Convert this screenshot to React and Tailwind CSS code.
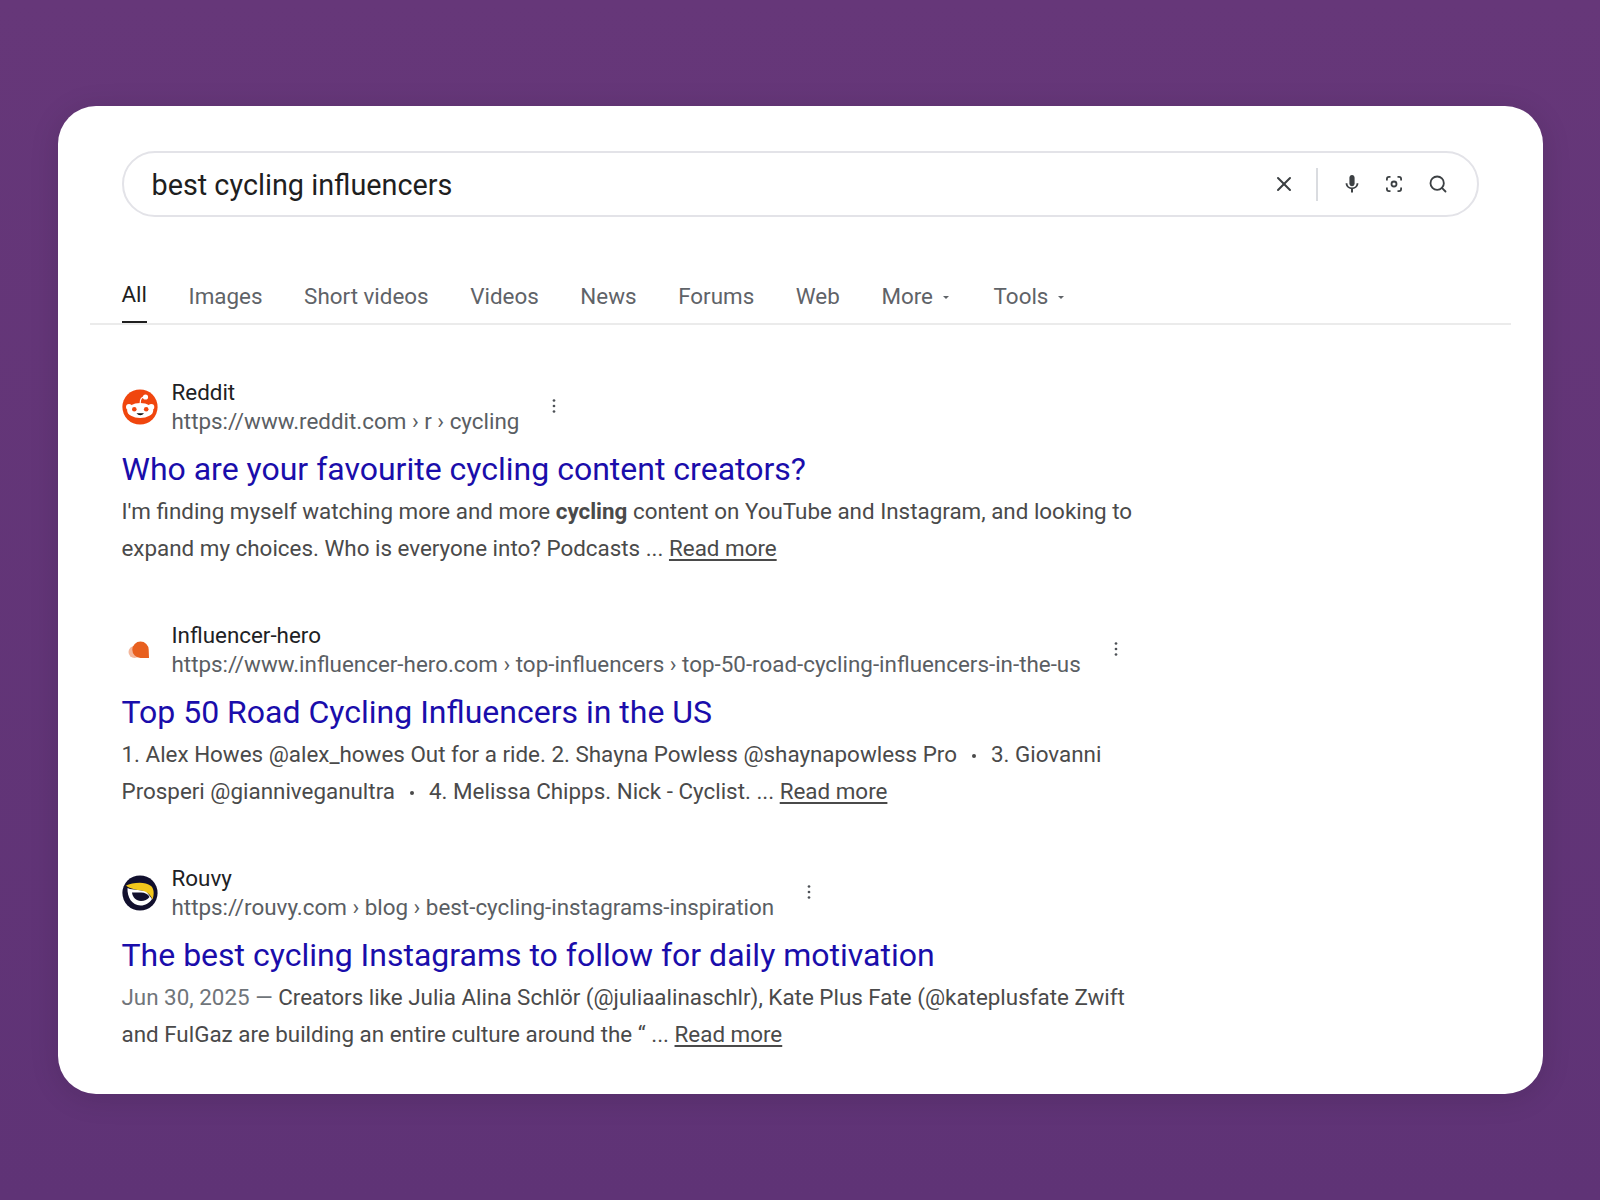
import React from 'react';
import { X, Search } from 'lucide-react';

const TABS = ['Images', 'Short videos', 'Videos', 'News', 'Forums', 'Web'];

function RedditIcon() {
  return (
    <svg viewBox="0 0 36 36" className="h-[36px] w-[36px]">
      <circle cx="18" cy="18" r="17.6" fill="#f0460e" />
      <circle cx="7" cy="18" r="3" fill="#fff" />
      <circle cx="29.300" cy="18" r="3" fill="#fff" />
      <ellipse cx="18.200" cy="21.500" rx="13" ry="7.500" fill="#fff" />
      <path d="M18.200 14 C18.200 10 19.500 7.500 23.500 7.800" fill="none" stroke="#fff" strokeWidth="1.200" />
      <circle cx="23.500" cy="8" r="2.600" fill="#fff" />
      <circle cx="12.300" cy="20.300" r="2.300" fill="#f0460e" />
      <circle cx="24.200" cy="20.300" r="2.300" fill="#f0460e" />
      <path d="M14.500 24.300 C16.500 26.800 20 26.800 22 24.300 Z" fill="#111" />
    </svg>
  );
}

function HeroIcon() {
  return (
    <svg viewBox="0 0 36 36" className="h-[36px] w-[36px]">
      <circle cx="12.500" cy="20" r="6" fill="#f4b79c" />
      <path d="M27 26 H18.500 A8.200 8.200 0 1 1 26.700 17.800 Z" fill="#e8601f" />
    </svg>
  );
}

function RouvyIcon() {
  return (
    <svg viewBox="0 0 36 36" className="h-[36px] w-[36px]">
      <circle cx="18" cy="18" r="17.600" fill="#12102e" />
      <path d="M5.500 13 C5 22 10 30.500 18.500 30.500 C23.500 30.500 27.500 28 30 24 L24 16 L8 14 Z" fill="#fff" />
      <path d="M10 17.500 C10.500 22 14 26 19 26 C22.500 26 25.500 24.500 27.500 22 C26 19 23 17.500 19 17.500 Z" fill="#12102e" />
      <path d="M4 10.500 C10 8 22 5.500 29 11 C32 13.500 32.500 19 30.500 24.500 C29 21 27 18 23 16.500 C17 14.500 9 15 4 10.500 Z" fill="#f3c71c" />
    </svg>
  );
}

function Dots() {
  return (
    <svg viewBox="0 0 4 16" className="h-[16px] w-[4px]" fill="#4d5156">
      <circle cx="2" cy="2.500" r="1.350" />
      <circle cx="2" cy="8" r="1.350" />
      <circle cx="2" cy="13.500" r="1.350" />
    </svg>
  );
}

function Caret() {
  return <span className="ml-[10px] mr-[3px] mt-[1px] h-0 w-0 border-x-[3px] border-t-[3px] border-x-transparent border-t-[#5f6368]" />;
}

function ReadMore() {
  return <span className="underline underline-offset-[3px]">Read more</span>;
}

function Sep() {
  return <span className="mx-[15px] inline-block h-[4px] w-[4px] rounded-full bg-[#4a4a4a] align-middle" />;
}

function Result({ icon, name, url, title, children }) {
  return (
    <div className="flex flex-col">
      <div className="flex items-center">
        <div className="w-[36px] shrink-0">{icon}</div>
        <div className="ml-[14px] flex flex-col">
          <span className="text-[22.400px] leading-[29px] text-[#202124]">{name}</span>
          <span className="text-[22.400px] leading-[29px] text-[#5a5e63]">{url}</span>
        </div>
        <div className="ml-[33px] -mt-[2px]">
          <Dots />
        </div>
      </div>
      <h3 className="mt-[11px] text-[32px] leading-[45px] text-[#1a0dab]">{title}</h3>
      <p className="mt-[1px] w-[1030px] text-[22.400px] leading-[36.700px] text-[#4a4a4a]">{children}</p>
    </div>
  );
}

export default function App() {
  return (
    <div className="flex h-[1200px] w-full items-start justify-center bg-gradient-to-b from-[#663779] to-[#5f3376] pt-[106px] font-['Roboto',sans-serif]">
      <div className="h-[988px] w-[1485px] rounded-[38px] bg-white px-[64px] pt-[45px] shadow-[0_4px_30px_rgba(0,0,0,0.12)]">
        <div className="flex h-[66px] items-center rounded-full border-2 border-[#e3e3e8] pl-[28px] pr-[29px]">
          <span className="flex-1 pt-[3px] text-[28.800px] text-[#1f1f1f]">best cycling influencers</span>
          <X className="h-[24px] w-[24px] text-[#3c4043]" strokeWidth={2} />
          <div className="ml-[20px] h-[33px] w-[2px] bg-[#dadce0]" />
          <svg viewBox="0 0 20 20" className="ml-[24px] h-[20px] w-[20px]" fill="#3c4043">
            <path d="M10 12.300c1.500 0 2.600-1.200 2.600-2.700V3.700C12.600 2.200 11.500 1 10 1S7.400 2.200 7.400 3.700v5.900c0 1.500 1.100 2.700 2.600 2.700z" />
            <path d="M14.600 9.300c0 2.600-2 4.300-4.600 4.300s-4.600-1.700-4.600-4.300H3.600c0 3 2.300 5.300 5.400 5.700V18.500h2V15c3.100-.4 5.400-2.700 5.400-5.700z" />
          </svg>
          <svg viewBox="0 0 20 20" className="ml-[22px] h-[20px] w-[20px]" fill="none" stroke="#3c4043" strokeWidth="1.800">
            <circle cx="10" cy="10" r="2.500" />
            <path d="M2.900 6.500V5a2.100 2.100 0 0 1 2.100-2.100h1.500M13.500 2.900H15A2.100 2.100 0 0 1 17.100 5v1.500M17.100 13.500V15a2.100 2.100 0 0 1-2.100 2.100h-1.500M6.500 17.100H5A2.100 2.100 0 0 1 2.900 15v-1.500" />
          </svg>
          <Search className="ml-[24px] h-[20px] w-[20px] text-[#3c4043]" strokeWidth={2.200} />
        </div>

        <div className="-mx-[32px] mt-[44px] flex h-[64px] items-stretch gap-[41.600px] border-b-2 border-[#ebebeb] px-[32px] text-[22.400px] text-[#5f6368]">
          <div className="flex flex-col items-center justify-between pt-[19px]">
            <span className="leading-[29px] text-[#1f1f1f]">All</span>
            <span className="h-[2px] w-full bg-[#1f1f1f]" />
          </div>
          {TABS.map((t) => (
            <span key={t} className="pt-[21px] leading-[29px]">{t}</span>
          ))}
          <span className="flex h-fit items-center pt-[21px] leading-[29px]">More<Caret /></span>
          <span className="flex h-fit items-center pt-[21px] leading-[29px]">Tools<Caret /></span>
        </div>

        <div className="mt-[53px] flex flex-col gap-[54.800px]">
          <Result
            icon={<RedditIcon />}
            name="Reddit"
            url="https://www.reddit.com › r › cycling"
            title="Who are your favourite cycling content creators?"
          >
            I'm finding myself watching more and more <b className="font-bold">cycling</b> content on YouTube and Instagram, and looking to expand my choices. Who is everyone into? Podcasts ... <ReadMore />
          </Result>
          <Result
            icon={<HeroIcon />}
            name="Influencer-hero"
            url="https://www.influencer-hero.com › top-influencers › top-50-road-cycling-influencers-in-the-us"
            title="Top 50 Road Cycling Influencers in the US"
          >
            1. Alex Howes @alex_howes Out for a ride. 2. Shayna Powless @shaynapowless Pro<Sep />3. Giovanni Prosperi @gianniveganultra<Sep />4. Melissa Chipps. Nick - Cyclist. ... <ReadMore />
          </Result>
          <Result
            icon={<RouvyIcon />}
            name="Rouvy"
            url="https://rouvy.com › blog › best-cycling-instagrams-inspiration"
            title="The best cycling Instagrams to follow for daily motivation"
          >
            <span className="text-[#70757a]">Jun 30, 2025 — </span>Creators like Julia Alina Schlör (@juliaalinaschlr), Kate Plus Fate (@kateplusfate Zwift and FulGaz are building an entire culture around the “ ... <ReadMore />
          </Result>
        </div>
      </div>
    </div>
  );
}
